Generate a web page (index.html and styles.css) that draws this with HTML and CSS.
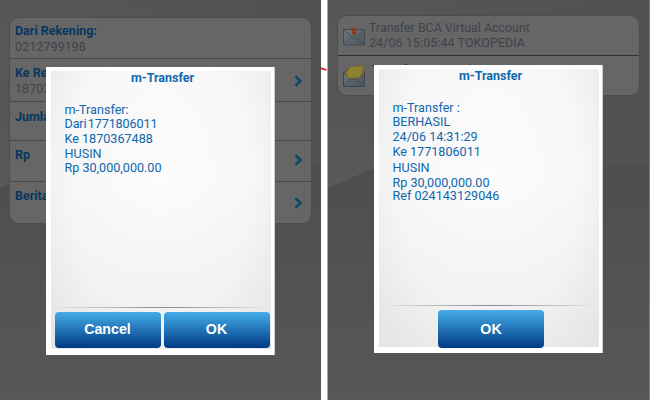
FILE: index.html
```html
<!DOCTYPE html>
<html lang="id">
<head>
<meta charset="utf-8">
<title>m-Transfer</title>
<link rel="stylesheet" href="styles.css">
</head>
<body>
<main class="board">
  <section class="screen screen-form">
    <div class="list form-list">
      <div class="row r1"><div><b>Dari Rekening:</b><span>0212799198</span></div></div>
      <div class="row r2"><div><b>Ke Re</b><span>18703</span></div><svg class="chev" viewBox="0 0 9 12"><path d="M1.500 1.200 6.500 6l-5 4.800"/></svg></div>
      <div class="row r3"><div><b>Jumla</b></div></div>
      <div class="row r4"><div><b>Rp</b></div><svg class="chev" viewBox="0 0 9 12"><path d="M1.500 1.200 6.500 6l-5 4.800"/></svg></div>
      <div class="row r5"><div><b>Berita</b></div><svg class="chev" viewBox="0 0 9 12"><path d="M1.500 1.200 6.500 6l-5 4.800"/></svg></div>
    </div>
    <div class="dialog confirm">
      <div class="sheet">
        <h2>m-Transfer</h2>
        <div class="message">
          <p>m-Transfer:</p>
          <p class="tight">Dari 1771806011</p>
          <p>Ke 1870367488</p>
          <p>HUSIN</p>
          <p>Rp 30,000,000.00</p>
        </div>
        <hr>
        <div class="actions"><button>Cancel</button><button>OK</button></div>
      </div>
    </div>
  </section>
  <div class="divider"><svg viewBox="0 0 6 5"><path d="M0 1.200 5.500 3"/></svg></div>
  <section class="screen screen-inbox">
    <div class="list inbox-list">
      <div class="mail m1">
        <svg class="icon" viewBox="0 0 22 19"><defs><linearGradient id="env" x1="0" y1="0" x2="1" y2="1"><stop offset="0" stop-color="#76787a"/><stop offset="1" stop-color="#43535f"/></linearGradient></defs><path d="M.5 2.500h21v15.500H.5z" fill="url(#env)" stroke="#48494b"/><path d="m1 17.500 7-7m13 7-7-7M1 3l10 9L21 3" fill="none" stroke="#465058"/><path d="m7.500 1.500 5-1-.3 4 1.800.2-3.200 4.800L8.500 5l1-.3z" fill="#8f3a18"/></svg>
        <div class="mail-text">Transfer BCA Virtual Account<br><span class="wide">24/06 15:05:44 TOKOPEDIA</span></div>
      </div>
      <div class="mail m2">
        <svg class="icon" viewBox="0 0 22 22"><path d="M.5 8 6 3h12l3.500 5v13.500H.5z" fill="url(#env)" stroke="#414244"/><path d="m1 21 7-6.500h6l7 6.500M1 8l6 7m14-7-7 7" fill="none" stroke="#465058"/><path d="M3 9c.3-3 2.500-6 5-7.500L20 .7V8l-4 5H5z" fill="#8c8231" stroke="#716a2c"/></svg>
        <div class="mail-text"><span>Transfer Antar Rekening</span></div>
      </div>
    </div>
    <div class="dialog success">
      <div class="sheet">
        <h2>m-Transfer</h2>
        <div class="message">
          <p>m-Transfer :</p>
          <p>BERHASIL</p>
          <p>24/06 14:31:29</p>
          <p class="spaced">Ke 1771806011</p>
          <p>HUSIN</p>
          <p class="close">Rp 30,000,000.00</p>
          <p>Ref 024143129046</p>
        </div>
        <hr>
        <div class="actions"><button>OK</button></div>
      </div>
    </div>
  </section>
</main>
</body>
</html>
```

FILE: styles.css
```css
* { box-sizing: border-box; }
body { margin: 0; width: 650px; height: 400px; overflow: hidden; font-family: Roboto, "Liberation Sans", sans-serif; }
.board { display: flex; width: 650px; height: 400px; background: #fff; }
.screen { position: relative; height: 400px; overflow: hidden; background: linear-gradient(90deg, transparent 12%, rgba(80, 80, 80, .8) 88%) 0 0 / 100% 250px no-repeat, linear-gradient(#565655, #595959 80px, #555 81px, #595959 185px, #595959 190px); }
.screen::before { content: ""; position: absolute; inset: 166px 0 0; background: linear-gradient(#4e4e4e, #505050 60px, #545454 150px, #575757); clip-path: polygon(0 22px, 46px 2px, 100% 0, 100% 100%, 0 100%); }
.screen-form { width: 321px; padding: 17px 10px 0 9px; }
.screen-inbox { width: 322px; padding: 15px 9px 0; border-right: 1px solid #00a0e4; }
.divider { width: 7px; background: #fff; border-right: 1px solid #aaa; padding-top: 67px; }
.divider svg { display: block; width: 6px; height: 5px; }
.divider path { fill: none; stroke: #f0182a; stroke-width: 1.800; }
.list { position: relative; border: 1px solid #4d4d4f; border-radius: 10px; background: #666; overflow: hidden; }
.form-list { width: 303px; height: 207px; }
.row { display: flex; justify-content: space-between; align-items: center; padding: 0 8px 0 5px; border-bottom: 1px solid #484848; line-height: 17px; }
.row > div { align-self: flex-start; padding-top: 5px; }
.row b, .row span { display: block; }
.row b { color: #07375f; font-size: 12.500px; }
.row span { color: #40434d; font-size: 12.600px; line-height: 16px; }
.r1 { height: 41px; }
.row.r1 > div { padding-top: 4px; }
.r2 { height: 43px; }
.r3 { height: 39px; }
.row.r3 > div { padding-top: 6px; }
.r4 { height: 41px; }
.r5 { height: 42px; border: 0; }
.chev { width: 9px; height: 12px; }
.r2 .chev { margin-top: 2px; }
.r4 .chev { margin-bottom: 3px; }
.chev path { fill: none; stroke: #0c4a68; stroke-width: 2.600; }
.inbox-list { width: 303px; height: 81px; }
.mail { display: flex; gap: 4px; padding-left: 5px; color: #3f424b; font-size: 12.400px; line-height: 14.600px; white-space: nowrap; }
.wide { letter-spacing: .13px; }
.m1 { height: 40px; padding-top: 5px; border-bottom: 1px solid #303030; }
.m2 { padding-top: 5px; color: #2b2b2c; }
.m2 .mail-text { padding: 2px 0 0 3px; }
.mail .icon { width: 22px; height: 19px; margin-top: 6px; flex: none; }
.m2 .icon { height: 22px; margin-top: 4px; }
.dialog { position: absolute; width: 229px; height: 288px; padding: 4px 3px 6px 5px; background: #fff; border-right: 1px solid #ccc; color: #0f67ae; }
.confirm { left: 46px; top: 67px; }
.success { left: 46px; top: 65px; }
.sheet { display: flex; flex-direction: column; height: 278px; background: linear-gradient(transparent 40%, rgba(225, 225, 225, .35)), radial-gradient(ellipse 64% 85% at 50% 38%, #fcfcfc, #f7f7f7 65%, #e8e8e8 100%); }
.dialog h2 { margin: 0; height: 15px; padding-left: 3px; text-align: center; font-size: 12.500px; line-height: 13px; }
.message { padding: 16.500px 0 0 13.500px; font-size: 12.600px; line-height: 14.700px; white-space: nowrap; flex: 1; }
.message p { margin: 0; }
.confirm .tight { word-spacing: -1.700px; letter-spacing: -.12px; }
.message .spaced { margin-bottom: 2px; }
.message .close { margin-bottom: -1.600px; }
hr { width: 100%; height: 1px; margin: 0; border: 0; background: linear-gradient(90deg, #e9e9e9, #858a94 52%, #e9e9e9); }
.actions { display: flex; justify-content: center; gap: 3px; height: 41px; padding: 4px 0 0 2px; }
.success .actions { padding: 4px 0 0 4px; }
button { width: 106px; height: 36px; padding: 0 0 2px; border: 0; border-radius: 4px; background: linear-gradient(#45ade9, #003984); color: #fff; font: bold 14.200px "Liberation Sans", sans-serif; }
.success button { height: 38px; padding-bottom: 1px; }
```
